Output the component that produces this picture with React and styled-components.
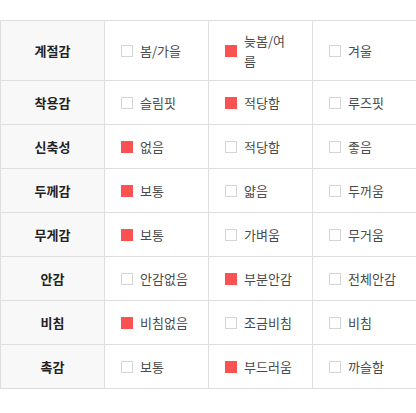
import React from 'react';
import styled, { createGlobalStyle } from 'styled-components';

const GlobalStyle = createGlobalStyle`
  html, body {
    margin: 0;
    padding: 0;
    background: #fff;
    overflow: hidden;
  }
  body {
    font-family: "Noto Sans CJK KR", "Noto Sans", sans-serif;
  }
`;

const rows = [
  { title: '계절감', options: ['봄/가을', '늦봄/여름', '겨울'], checked: 1 },
  { title: '착용감', options: ['슬림핏', '적당함', '루즈핏'], checked: 1 },
  { title: '신축성', options: ['없음', '적당함', '좋음'], checked: 0 },
  { title: '두께감', options: ['보통', '얇음', '두꺼움'], checked: 0 },
  { title: '무게감', options: ['보통', '가벼움', '무거움'], checked: 0 },
  { title: '안감', options: ['안감없음', '부분안감', '전체안감'], checked: 1 },
  { title: '비침', options: ['비침없음', '조금비침', '비침'], checked: 0 },
  { title: '촉감', options: ['보통', '부드러움', '까슬함'], checked: 1 },
];

export default function App() {
  return (
    <>
      <GlobalStyle />
      <Wrapper>
        <Table>
          {rows.map((row) => (
            <React.Fragment key={row.title}>
              <HeadCell>{row.title}</HeadCell>
              {row.options.map((opt, i) => (
                <Cell key={opt}>
                  <Box $checked={i === row.checked} />
                  <Label>{opt}</Label>
                </Cell>
              ))}
            </React.Fragment>
          ))}
        </Table>
      </Wrapper>
    </>
  );
}

const Wrapper = styled.div`
  padding-top: 20px;
`;

const Table = styled.div`
  display: grid;
  grid-template-columns: 104px 104px 104px 110px;
  width: 422px;
  border-top: 1px solid #dedede;
  border-left: 1px solid #dedede;
  box-sizing: border-box;
`;

const CellBase = styled.div`
  box-sizing: border-box;
  min-height: 44px;
  padding: 10px 16px;
  border-right: 1px solid #dedede;
  border-bottom: 1px solid #dedede;
  display: flex;
  align-items: center;
  font-size: 13px;
  line-height: 19.5px;
`;

const HeadCell = styled(CellBase)`
  justify-content: center;
  background: #f8f8f8;
  font-weight: 700;
  color: #222;
  padding: 10px 8px;
`;

const Cell = styled(CellBase)`
  gap: 7px;
  color: #4a4a4a;
`;

const Box = styled.span`
  flex: 0 0 12px;
  width: 12px;
  height: 12px;
  box-sizing: border-box;
  border: 1px solid ${(p) => (p.$checked ? '#fa5252' : '#d4d4d4')};
  background: ${(p) => (p.$checked ? '#fa5252' : '#fff')};
`;

const Label = styled.span`
  min-width: 0;
  word-break: break-all;
`;
